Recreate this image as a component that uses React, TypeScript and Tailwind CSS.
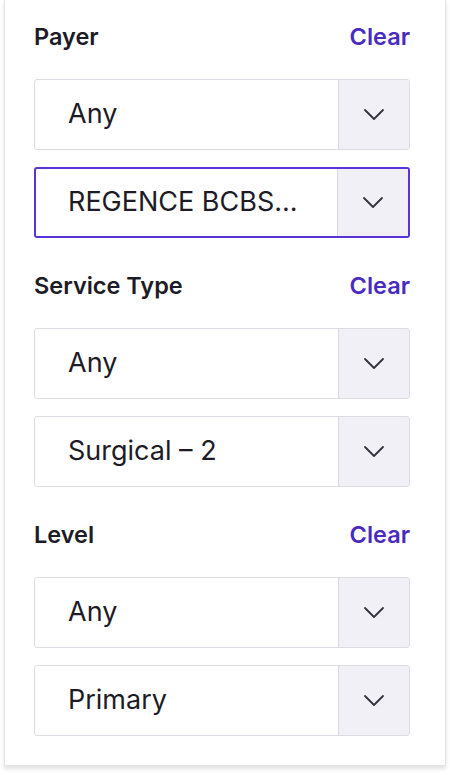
const SECTIONS = [
  { label: 'Payer', values: ['Any', 'REGENCE BCBS...'], focused: 1 },
  { label: 'Service Type', values: ['Any', 'Surgical – 2'], focused: -1 },
  { label: 'Level', values: ['Any', 'Primary'], focused: -1 },
];

function Chevron() {
  return (
    <svg width="22" height="13" viewBox="0 0 22 13" fill="none">
      <path
        d="M2 2 L11 11 L20 2"
        stroke="#33313d"
        strokeWidth="1.8"
        strokeLinecap="round"
        strokeLinejoin="round"
      />
    </svg>
  );
}

function SelectBox({ value, focused }: { value: string; focused: boolean }) {
  return (
    <div
      className={`flex h-[71px] overflow-hidden rounded-[3px] bg-white ${
        focused ? 'border-2 border-[#5b34d9]' : 'border border-[#dcdbe3]'
      }`}
    >
      <div
        className={`flex flex-1 items-center truncate text-[27px] text-[#1d1b26] ${
          focused ? 'pl-[32px]' : 'pl-[33px]'
        }`}
      >
        {value}
      </div>
      <div className="flex w-[71px] items-center justify-center border-l border-[#d9d8df] bg-[#f1f0f6]">
        <Chevron />
      </div>
    </div>
  );
}

export default function App() {
  return (
    <div
      className="h-[775px] w-[450px] bg-white px-[4px]"
      style={{ fontFamily: 'Inter, "Noto Sans", sans-serif' }}
    >
      <div className="flex h-[766px] flex-col gap-[34px] border-x border-b border-[#e4e4e6] bg-white pt-[23px] pr-[35px] pl-[29px] shadow-[0_3px_4px_rgba(0,0,0,0.12)]">
        {SECTIONS.map((section) => (
          <div key={section.label} className="flex flex-col">
            <div className="flex h-[28px] items-center justify-between">
              <span className="text-[23.5px] font-semibold text-[#1d1b26]">
                {section.label}
              </span>
              <button className="text-[23.5px] font-semibold text-[#4a2bc0]">
                Clear
              </button>
            </div>
            <div className="mt-[28px] flex flex-col gap-[17px]">
              {section.values.map((value, i) => (
                <SelectBox
                  key={value + i}
                  value={value}
                  focused={section.focused === i}
                />
              ))}
            </div>
          </div>
        ))}
      </div>
    </div>
  );
}
